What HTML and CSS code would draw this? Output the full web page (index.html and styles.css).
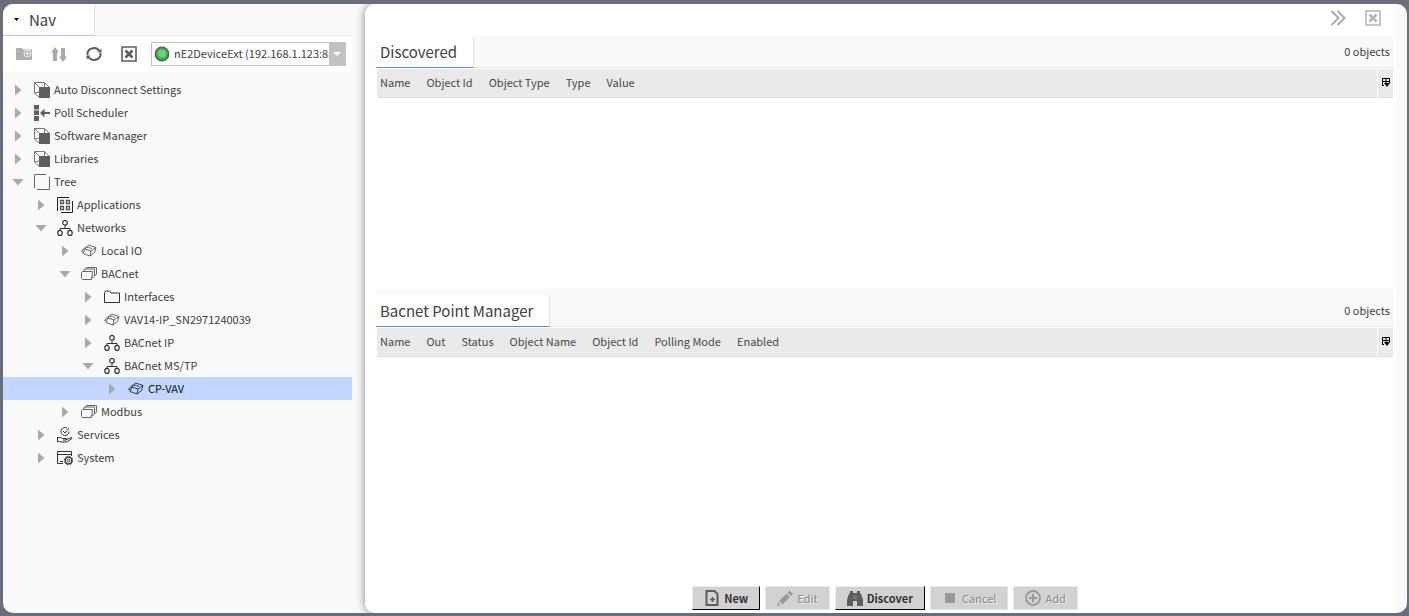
FILE: index.html
```
<!DOCTYPE html>
<html lang="en">
<head>
    <meta charset="UTF-8">
    <meta name="viewport" content="width=device-width, initial-scale=1.0">
    <title>Bacnet Point Manager</title>
    <link rel="stylesheet" href="styles.css">
</head>
<body>
    <!-- icons used more than once -->
    <svg class="sprite" aria-hidden="true">
        <symbol id="right" viewBox="0 0 16 16"><path d="M5 2.500v11l6.500-5.500z" fill="#a9a9a9"/></symbol>
        <symbol id="down" viewBox="0 0 16 16"><path d="M2.500 5h11L8 11.500z" fill="#a9a9a9"/></symbol>
        <symbol id="cube" viewBox="0 0 16 16">
            <path d="M.5 11V.5h10l5 5M.5.5l5 5M10.500.5v5M.5 11l5 4.500M.5 11l5-1" fill="none" stroke="#777"/>
            <path d="M5 5h11v11H5z" fill="#5e5e5e"/>
        </symbol>
        <symbol id="net" viewBox="0 0 16 16">
            <path d="M8 5.500V8M3 10.500V8.500h10v2" fill="none" stroke="#333"/>
            <g fill="none" stroke="#333" stroke-width="1.200"><circle cx="8" cy="2.800" r="2.300"/><ellipse cx="3" cy="12.900" rx="2.200" ry="2.500"/><ellipse cx="13" cy="12.900" rx="2.200" ry="2.500"/></g>
        </symbol>
        <symbol id="device" viewBox="0 0 16 16">
            <path d="M4 6 7.500 2l7.500 2.500-1.500 5L9 13 2 10.500zM4 6l6 2 5-3.500M10 8l-1 5M5 3.500.5 8.500 2 9M6 4.500c2-1 3 1 5 1" fill="none" stroke="currentColor" stroke-width=".8" stroke-linejoin="round"/>
        </symbol>
        <symbol id="stack" viewBox="0 0 16 16">
            <path d="M1.500 5.500h10l-1 8H1.500l-1-1v-6zM2.500 5.500l1-2.500h10v7l-2.500 2M4.500 3l1-1.500h10V8l-2 2" fill="none" stroke="#666"/>
        </symbol>
        <symbol id="close" viewBox="0 0 16 16">
            <path d="M1 1h14v14H1z" fill="none" stroke="currentColor" stroke-width="1.600"/>
            <path d="m4.500 4.500 7 7m0-7-7 7" stroke="currentColor" stroke-width="2.600"/>
        </symbol>
        <symbol id="columns" viewBox="0 0 8 9">
            <path d="M.5 8V.5h7V5M.5 3.500h7M4 .5V6M0 7.500h2" fill="none" stroke="#000"/>
            <path d="M2 5h6L5 9z"/>
        </symbol>
    </svg>

    <div class="window">
        <aside class="nav">
            <div class="nav-head">
                <button class="nav-tab"><svg width="5" height="3" viewBox="0 0 5 3"><path d="M0 0h5L2.500 3z"/></svg>Nav</button>
            </div>
            <div class="toolbar">
                <button class="tool off" aria-label="New folder">
                    <svg viewBox="0 0 16 16"><path d="M0 2h6l1 1.500h9V14H0z" fill="#b0b0b0"/><circle cx="11.500" cy="7.500" r="3.500" fill="none" stroke="#f4f4f4"/><path d="M11.500 5.500v4M9.500 7.500h4" stroke="#fff"/></svg>
                </button>
                <button class="tool off" aria-label="Sync">
                    <svg viewBox="0 0 16 16"><path d="M4 1 0 6.500h2V15h4V6.500h2zM12 16l4-5.500h-2V2h-4v8.500H8z" fill="#aaa"/></svg>
                </button>
                <button class="tool" aria-label="Refresh">
                    <svg viewBox="0 0 16 16"><path d="M1.500 9V7a6.500 6 0 0 1 12-2M14.500 7v2a6.500 6 0 0 1-12 2" fill="none" stroke="#5e5e5e" stroke-width="2"/><path d="M15.500 2.500v4h-4zM.5 13.500v-4h4z" fill="#5e5e5e"/></svg>
                </button>
                <button class="tool" aria-label="Close"><svg><use href="#close"/></svg></button>
                <div class="station">
                    <svg class="dot" viewBox="0 0 16 16"><circle cx="8" cy="8" r="6.800" fill="#2bb34b" stroke="#4d5b50" stroke-width="1.200"/><circle cx="8" cy="7.500" r="4" fill="#7cc982"/></svg>
                    <select aria-label="Station">
                        <option>nE2DeviceExt (192.168.1.123:88)</option>
                    </select>
                    <span class="drop"><svg width="8" height="4" viewBox="0 0 8 4"><path d="M0 0h8L4 4z" fill="#fff"/></svg></span>
                </div>
            </div>

            <ul class="tree">
                <li><div class="row"><button aria-label="Expand"><svg><use href="#right"/></svg></button><svg class="icon"><use href="#cube"/></svg><span>Auto Disconnect Settings</span></div></li>
                <li><div class="row"><button aria-label="Expand"><svg><use href="#right"/></svg></button><svg class="icon" viewBox="0 0 16 16"><path d="M0 0h5v4.500H0zM0 5.500h5V10H0zM0 11h5v5H0zM6 8l4.500-4.500V7H16v2h-5.500v3.500z" fill="#5e5e5e"/></svg><span>Poll Scheduler</span></div></li>
                <li><div class="row"><button aria-label="Expand"><svg><use href="#right"/></svg></button><svg class="icon"><use href="#cube"/></svg><span>Software Manager</span></div></li>
                <li><div class="row"><button aria-label="Expand"><svg><use href="#right"/></svg></button><svg class="icon"><use href="#cube"/></svg><span>Libraries</span></div></li>
                <li>
                    <div class="row"><button aria-label="Collapse"><svg><use href="#down"/></svg></button><svg class="icon" viewBox="0 0 16 16"><path d="M.5 14V.5H12M3 15.500h12.500V3" fill="none" stroke="#666"/></svg><span>Tree</span></div>
                    <ul>
                        <li><div class="row level1"><button aria-label="Expand"><svg><use href="#right"/></svg></button><svg class="icon" viewBox="0 0 16 16"><path d="M.5 14V.5H12M4 15.500h11.500V4" fill="none" stroke="#222"/><path d="M3.500 3.500h3v3h-3zM9.500 3.500h3v3h-3zM3.500 9.500h3v3h-3zM9.500 9.500h3v3h-3z" fill="none" stroke="#555" stroke-width="1.300"/></svg><span>Applications</span></div></li>
                        <li>
                            <div class="row level1"><button aria-label="Collapse"><svg><use href="#down"/></svg></button><svg class="icon"><use href="#net"/></svg><span>Networks</span></div>
                            <ul>
                                <li><div class="row level2"><button aria-label="Expand"><svg><use href="#right"/></svg></button><svg class="icon"><use href="#device"/></svg><span>Local IO</span></div></li>
                                <li>
                                    <div class="row level2"><button aria-label="Collapse"><svg><use href="#down"/></svg></button><svg class="icon"><use href="#stack"/></svg><span>BACnet</span></div>
                                    <ul>
                                        <li><div class="row level3"><button aria-label="Expand"><svg><use href="#right"/></svg></button><svg class="icon" viewBox="0 0 16 16"><path d="M.5 13.500v-10l1-1.500h4l1.500 2h8.500v9.500z" fill="none" stroke="#333"/></svg><span>Interfaces</span></div></li>
                                        <li><div class="row level3"><button aria-label="Expand"><svg><use href="#right"/></svg></button><svg class="icon"><use href="#device"/></svg><span>VAV14-IP_SN2971240039</span></div></li>
                                        <li><div class="row level3"><button aria-label="Expand"><svg><use href="#right"/></svg></button><svg class="icon"><use href="#net"/></svg><span>BACnet IP</span></div></li>
                                        <li>
                                            <div class="row level3"><button aria-label="Collapse"><svg><use href="#down"/></svg></button><svg class="icon"><use href="#net"/></svg><span>BACnet MS/TP</span></div>
                                            <ul>
                                                <li><div class="row level4 selected"><button aria-label="Expand"><svg><use href="#right"/></svg></button><svg class="icon"><use href="#device"/></svg><span>CP-VAV</span></div></li>
                                            </ul>
                                        </li>
                                    </ul>
                                </li>
                                <li><div class="row level2"><button aria-label="Expand"><svg><use href="#right"/></svg></button><svg class="icon"><use href="#stack"/></svg><span>Modbus</span></div></li>
                            </ul>
                        </li>
                        <li><div class="row level1"><button aria-label="Expand"><svg><use href="#right"/></svg></button><svg class="icon" viewBox="0 0 16 16"><path d="M12 4.500A4 4 0 1 1 10 1M6 4l2 2 4-5M.5 10v5M.5 10.500h3l2 1h4v1.500H6M9.500 12.500l5-2 .5 1-5 3.500H4l-1.500-.5H.5" fill="none" stroke="#333"/></svg><span>Services</span></div></li>
                        <li><div class="row level1"><button aria-label="Expand"><svg><use href="#right"/></svg></button><svg class="icon" viewBox="0 0 16 16"><path d="M6 13.500H.5v-12h14V6M.5 4.500h14M3 11.500h3" fill="none" stroke="#333"/><circle cx="11.500" cy="10.500" r="3.300" fill="none" stroke="#333" stroke-width="1.300"/><circle cx="11.500" cy="10.500" r="4.200" fill="none" stroke="#333" stroke-dasharray="1.600 1.700"/><circle cx="11.500" cy="10.500" r="1.300" fill="none" stroke="#333"/></svg><span>System</span></div></li>
                    </ul>
                </li>
            </ul>
        </aside>

        <main class="main">
            <div class="content">
                <div class="top">
                    <button aria-label="More"><svg viewBox="0 0 16 16"><path d="m1.500 1 7 7-7 7M7.500 1l7 7-7 7" fill="none" stroke="#aaa" stroke-width="2"/></svg></button>
                    <button aria-label="Close pane"><svg><use href="#close"/></svg></button>
                </div>

                <section class="pane">
                    <div class="pane-head">
                        <h2>Discovered</h2>
                        <span class="count">0 objects</span>
                    </div>
                    <table>
                        <thead>
                            <tr>
                                <th>Name</th>
                                <th>Object Id</th>
                                <th>Object Type</th>
                                <th>Type</th>
                                <th class="fill">Value</th>
                                <th class="config"><button aria-label="Columns"><svg><use href="#columns"/></svg></button></th>
                            </tr>
                        </thead>
                    </table>
                </section>

                <section class="pane">
                    <div class="pane-head lower">
                        <h2>Bacnet Point Manager</h2>
                        <span class="count">0 objects</span>
                    </div>
                    <table>
                        <thead>
                            <tr>
                                <th>Name</th>
                                <th>Out</th>
                                <th>Status</th>
                                <th>Object Name</th>
                                <th>Object Id</th>
                                <th>Polling Mode</th>
                                <th class="fill">Enabled</th>
                                <th class="config"><button aria-label="Columns"><svg><use href="#columns"/></svg></button></th>
                            </tr>
                        </thead>
                    </table>
                </section>

                <div class="actions">
                    <button><svg viewBox="0 0 16 16"><path d="M2.500 1h8l3 3v11h-11z" fill="none" stroke="#5e5e5e" stroke-width="2"/><path d="M8.500 7v5M6 9.500h5" fill="none" stroke="#5e5e5e" stroke-width="1.600"/></svg>New</button>
                    <button disabled><svg viewBox="0 0 16 16"><path d="m2 11 7.500-7.500 3.500 3.500-7.500 7.500zM10.500 2.500 12.500.5 16 4l-2 2zM1 12.500l2.500 2.500-3.500 1z" fill="#999"/></svg>Edit</button>
                    <button><svg viewBox="0 0 16 16"><path d="M3 1h3v2h4V1h3v2.500h1L16 10v6h-6v-5H6v5H0v-6l2-6.500h1z" fill="#5e5e5e"/><path d="M7 5v4M9 5v4" stroke="#888"/></svg>Discover</button>
                    <button disabled><svg viewBox="0 0 16 16"><path d="M3 3h10v10H3z" fill="#999"/></svg>Cancel</button>
                    <button disabled><svg viewBox="0 0 16 16"><circle cx="8" cy="8" r="7" fill="none" stroke="#999" stroke-width="1.800"/><path d="M8 4v8M4 8h8" stroke="#999" stroke-width="2"/></svg>Add</button>
                </div>
            </div>
        </main>
    </div>
</body>
</html>
```
FILE: styles.css
```
*{
    margin: 0;
    padding: 0;
    box-sizing: border-box;
}
body{
    height: 100vh;
    padding: 4px 2px 3px 3px;
    background-color: #696e79;
    font-family: "Noto Sans CJK SC", "Noto Sans", sans-serif;
    font-size: 11px;
    color: #404040;
}
button, select{
    font: inherit;
    color: inherit;
    border: none;
    background: none;
}
ul{
    list-style: none;
}
.sprite{
    display: none;
}
.window{
    height: 100%;
    display: flex;
    background-color: #f9f9f9;
    border-radius: 10px;
    overflow: hidden;
}

/* left side */
.nav{
    width: 362px;
    flex-shrink: 0;
    padding-right: 13px;
}
.nav-head{
    height: 32px;
    display: flex;
    border-bottom: 1px solid #ececec;
}
.nav-tab{
    width: 92px;
    height: 32px;
    display: flex;
    align-items: center;
    gap: 10px;
    padding-left: 11px;
    background-color: #fff;
    border-right: 1px solid #e2e2e2;
    border-bottom: 1px solid #b0c8ee;
    font-size: 15px;
}
.toolbar{
    height: 36px;
    display: flex;
    align-items: center;
    gap: 19px;
    padding: 0 6px 0 13px;
    background-color: #fff;
}
.tool{
    width: 16px;
    height: 16px;
    color: #5e5e5e;
}
.tool svg{
    display: block;
    width: 16px;
    height: 16px;
}
.station{
    flex: 1;
    min-width: 0;
    height: 24px;
    margin-left: -5px;
    display: flex;
    align-items: center;
    padding-left: 2px;
    border: 1px solid #c2c2c2;
}
.dot{
    width: 16px;
    height: 16px;
    flex-shrink: 0;
}
.station select{
    flex: 1;
    min-width: 0;
    height: 22px;
    padding: 0 0 2px 4px;
    appearance: none;
    outline: none;
    text-overflow: clip;
}
.drop{
    width: 16px;
    height: 22px;
    display: flex;
    justify-content: center;
    align-items: center;
    background-color: #c2c2c2;
    flex-shrink: 0;
}
.tree{
    padding-top: 6px;
}
.row{
    height: 23px;
    display: flex;
    align-items: center;
    padding-left: 7px;
    white-space: nowrap;
}
.row button{
    width: 16px;
    height: 16px;
    margin-right: 8px;
}
.row button svg{
    display: block;
    width: 16px;
    height: 16px;
}
.row span{
    padding-bottom: 2px;
}
.icon{
    width: 16px;
    height: 16px;
    margin-right: 4px;
}
.level1{
    padding-left: 30px;
}
.level2{
    padding-left: 54px;
}
.level3{
    padding-left: 77px;
}
.level4{
    padding-left: 101px;
}
.selected{
    background-color: #c2d6ff;
    color: #111;
}

/* right side */
.main{
    flex: 1;
    min-width: 0;
    padding-right: 11px;
    background-color: #f9f9f9;
    border-radius: 10px;
    box-shadow: 0 0 9px rgba(0,0,0,0.5);
}
.content{
    height: 100%;
    display: grid;
    grid-template-rows: 32px 46fr 54fr 27px;
    padding: 0 2px 0 11px;
    background-color: #fff;
    border-radius: 10px 0 0 10px;
}
.top{
    display: flex;
    justify-content: flex-end;
    align-items: center;
    gap: 19px;
    padding: 0 13px 4px 0;
}
.top button{
    width: 16px;
    height: 16px;
    color: #b5b5b5;
}
.top svg{
    display: block;
    width: 16px;
    height: 16px;
}
.pane{
    min-height: 0;
}
.pane-head{
    height: 32px;
    display: flex;
    justify-content: space-between;
    background-color: #f9f9f9;
    border-bottom: 1px solid #e6e6e6;
}
.lower{
    height: 38px;
    padding-top: 6px;
}
.pane-head h2{
    height: 32px;
    line-height: 31px;
    padding: 0 16px 0 4px;
    background-color: #fff;
    border-right: 1px solid #e2e2e2;
    border-bottom: 1px solid #5c8fdd;
    font-size: 15px;
    font-weight: normal;
}
.count{
    padding-right: 4px;
    line-height: 31px;
}
.pane table{
    width: calc(100% - 2px);
    margin: 1px 1px 0;
    border-collapse: collapse;
    background-color: #eaeaea;
    border-bottom: 1px solid #e0e0e0;
}
th{
    height: 28px;
    padding: 0 12px 2px 4px;
    text-align: left;
    font-weight: normal;
    white-space: nowrap;
    color: #484848;
}
th:first-child{
    padding-left: 3px;
}
th.fill{
    width: 100%;
}
th.config{
    padding: 0;
    border-left: 1px solid #fff;
}
.config button{
    width: 15px;
    height: 28px;
    display: flex;
    justify-content: center;
    align-items: center;
    padding-bottom: 2px;
}
.config svg{
    width: 8px;
    height: 9px;
}
.actions{
    display: flex;
    justify-content: center;
    align-items: flex-start;
    gap: 5px;
}
.actions button{
    height: 24px;
    display: flex;
    align-items: center;
    gap: 4px;
    padding: 0 11px;
    background-color: #d2d2d2;
    border: 1px solid #eee;
    border-right-color: #000;
    border-bottom-color: #000;
    font-weight: bold;
    color: #333;
}
.actions button:disabled{
    border-color: #e6e6de;
    font-weight: normal;
    color: #858585;
    text-shadow: 1px 1px #f4f4e8;
}
.actions svg{
    width: 16px;
    height: 16px;
}
```
